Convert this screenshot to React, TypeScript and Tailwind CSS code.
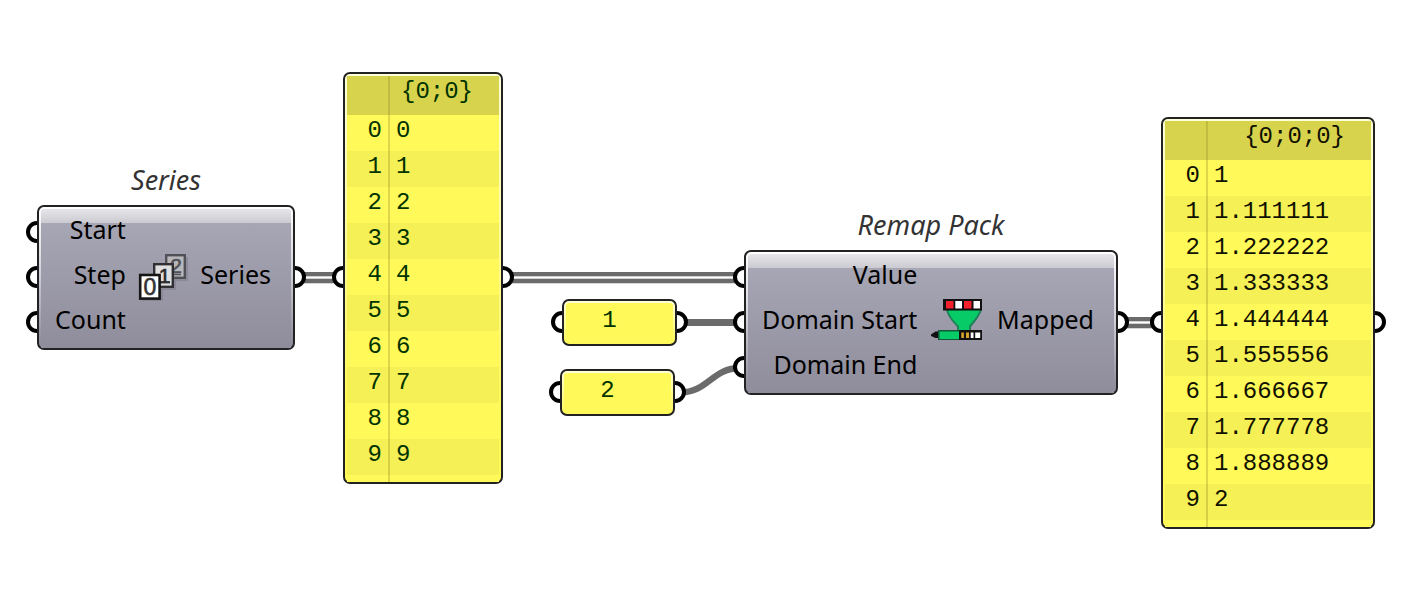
import type { ReactNode } from "react";

function Grips({ side, count = 1, offset }: { side: "left" | "right"; count?: number; offset: string }) {
  return (
    <div className={`absolute flex flex-col gap-[23px] ${side === "left" ? "-left-[11px]" : "-right-[11px]"} ${offset}`}>
      {Array.from({ length: count }, (_, i) => (
        <span key={i} className="block size-[22px] rounded-full border-4 border-black bg-white" />
      ))}
    </div>
  );
}

function ComponentNode({
  title,
  inputs,
  output,
  icon,
  place,
}: {
  title: string;
  inputs: string[];
  output: string;
  icon: ReactNode;
  place: string;
}) {
  return (
    <section className={`absolute ${place}`}>
      <h2 className="absolute inset-x-0 bottom-full pb-[7px] text-center text-[27px] leading-9 text-[#333] italic">{title}</h2>
      <Grips side="left" count={inputs.length} offset="top-4" />
      <Grips side="right" offset="top-[61px]" />
      <div className="relative rounded-[7px] border-2 border-[#222] bg-[linear-gradient(#ffffff,#d4d4dc_45%,#918f9d_95%)] px-[2px] pt-[2px]">
        <div className="flex items-center justify-between rounded-t-[3px] bg-[linear-gradient(#e6e6ea,#cacad0_14px,#a7a6b4_14px,#8f8d9b)] pr-5 pl-[14px]">
          <ul className="-mt-[2px] pb-[6px] text-right">
            {inputs.map((name) => (
              <li key={name} className="leading-[45px]">
                {name}
              </li>
            ))}
          </ul>
          <div className="pb-1">{icon}</div>
          <p className="pb-2 leading-[45px]">{output}</p>
        </div>
      </div>
    </section>
  );
}

function DataPanel({ path, values, place, ink }: { path: string; values: string[]; place: string; ink: string }) {
  return (
    <section className={`absolute ${place}`}>
      <Grips side="left" offset="top-[194px]" />
      <Grips side="right" offset="top-[194px]" />
      <div className="relative rounded-[7px] border-2 border-[#222] bg-[linear-gradient(#ffffd8,#fdfbb0_30%,#fff95a_80%)] px-[2px] pt-[2px]">
        <div className="relative rounded-t-[3px] bg-[#fff95a] pb-[7px]">
          <table className={`w-full table-fixed border-collapse font-['Liberation_Mono',monospace] text-[24px] ${ink}`}>
            <thead>
              <tr className="bg-[#d8d34d]">
                <td className="w-[41px]" />
                <th scope="col" className="pr-[26px] pb-2 text-right leading-[31px] font-normal">
                  {path}
                </th>
              </tr>
            </thead>
            <tbody>
              {values.map((value, i) => (
                <tr key={i} className="odd:bg-[#fff95a] even:bg-[#f5f055]">
                  <th scope="row" className="pr-[6px] pb-1 text-right leading-8 font-normal">
                    {i}
                  </th>
                  <td className="pb-1 pl-2 text-left leading-8">{value}</td>
                </tr>
              ))}
            </tbody>
          </table>
          <span className="absolute inset-y-0 left-[41px] w-[2px] bg-[#8c8420]/30" />
        </div>
      </div>
    </section>
  );
}

function ValuePanel({ value, place }: { value: string; place: string }) {
  return (
    <section className={`absolute w-[115px] ${place}`}>
      <Grips side="left" offset="top-3" />
      <Grips side="right" offset="top-3" />
      <div className="relative rounded-[7px] border-2 border-[#222] bg-[linear-gradient(#ffffd8,#fff95a)] px-[2px] pt-[2px] pb-px">
        <p className="rounded-[3px] bg-[#fff95a] pr-5 pb-[4px] text-center font-['Liberation_Mono',monospace] text-[24px] leading-9 text-[#003300]">
          {value}
        </p>
      </div>
    </section>
  );
}

function SeriesIcon() {
  return (
    <svg width="50" height="48" viewBox="0 0 50 48" className="shrink-0" fontFamily="Liberation Sans Narrow, Liberation Sans, sans-serif" textAnchor="middle" aria-hidden="true">
      <g fill="#5c5a68" opacity=".25">
        <rect x="30" y="4" width="20" height="24" />
        <rect x="18" y="13" width="20" height="24" />
        <rect x="4" y="24" width="21" height="24" />
      </g>
      <rect x="28.2" y="2.2" width="18.6" height="22.6" fill="#b8b8bc" stroke="#505056" strokeWidth="2.4" />
      <text x="38" y="19.5" fontSize="21" fill="#505056" stroke="#505056" strokeWidth=".6">2</text>
      <path d="M32 21.5H43" stroke="#505056" strokeWidth="1.5" />
      <rect x="16.2" y="11.2" width="18.6" height="22.6" fill="#e0e0e0" stroke="#303034" strokeWidth="2.4" />
      <text x="26.5" y="30" fontSize="21" fill="#29292c" stroke="#29292c" strokeWidth=".6">1</text>
      <path d="M22 29.3H32" stroke="#303034" strokeWidth="1.8" />
      <rect x="2.2" y="22" width="19.4" height="23.6" fill="#fff" stroke="#161616" strokeWidth="2.6" />
      <text x="12" y="42" fontSize="23" fill="#333" stroke="#333" strokeWidth=".6">0</text>
    </svg>
  );
}

function RemapIcon() {
  return (
    <svg width="52" height="48" viewBox="0 0 52 48" className="shrink-0" aria-hidden="true">
      <path d="M15 12H51C48 20 43 25 40 29V32H26V29C23 25 17 20 15 12Z" fill="#21805a" />
      <path d="M17 12H49C46 19 41 24 38 28V32H28V28C24 24 19 19 17 12Z" fill="#06cb66" />
      <rect x="12" y="1" width="39" height="11.5" fill="#111" />
      <rect x="15" y="3" width="7.5" height="7.5" fill="#f5222d" />
      <rect x="24.3" y="3" width="6.7" height="7.5" fill="#fff" />
      <rect x="33" y="3" width="7.5" height="7.5" fill="#f5222d" />
      <rect x="42.5" y="3" width="6.5" height="7.5" fill="#fff" />
      <path d="M0 36.5L4.5 33.5H7.5V40H4.5L0 38Z" fill="#111" />
      <rect x="7" y="32" width="22" height="10" fill="#14573a" />
      <rect x="8.5" y="33.5" width="19.5" height="7.5" fill="#06cb66" />
      <rect x="28" y="32" width="23" height="10" fill="#111" />
      <rect x="30.3" y="34.5" width="2.6" height="5.5" fill="#d8a32a" />
      <rect x="35" y="34.5" width="3" height="5.5" fill="#d8a32a" />
      <rect x="39.7" y="34.5" width="2.8" height="5.5" fill="#fff" />
      <rect x="44.2" y="34.5" width="5" height="5.5" fill="#fff" />
    </svg>
  );
}

function DoubleWire({ from, to, y }: { from: number; to: number; y: number }) {
  return (
    <g>
      <path d={`M${from} ${y + 0.5}H${to}`} stroke="#d6d6d6" strokeWidth="12" />
      <path d={`M${from} ${y}H${to}`} stroke="#6b6b6b" strokeWidth="11" />
      <path d={`M${from} ${y}H${to}`} stroke="#d0d0d0" strokeWidth="3" />
      <path d={`M${from} ${y}H${to}`} stroke="#fff" strokeWidth="1" />
    </g>
  );
}

export default function App() {
  return (
    <main className="relative min-h-screen overflow-hidden bg-white font-['Noto_Sans',sans-serif] text-[25px] text-black">
      <svg className="absolute inset-0 size-full" fill="none" aria-hidden="true">
        <DoubleWire from={296} to={343} y={277.5} />
        <DoubleWire from={504} to={744} y={277.5} />
        <DoubleWire from={1118} to={1161} y={322.5} />
        <path d="M677 322.5H744" stroke="#6b6b6b" strokeWidth="7" />
        <path d="M674 392.5H680C708 392.5 712 368 740 368" stroke="#6b6b6b" strokeWidth="6.5" />
      </svg>

      <ComponentNode title="Series" inputs={["Start", "Step", "Count"]} output="Series" icon={<SeriesIcon />} place="top-[205px] left-[37px] w-[258px]" />
      <DataPanel
        path="{0;0}"
        values={["0", "1", "2", "3", "4", "5", "6", "7", "8", "9"]}
        place="top-[72px] left-[343px] w-[160px]"
        ink="text-[#003300]"
      />
      <ValuePanel value="1" place="top-[299px] left-[562px]" />
      <ValuePanel value="2" place="top-[369px] left-[560px]" />
      <ComponentNode
        title="Remap Pack"
        inputs={["Value", "Domain Start", "Domain End"]}
        output="Mapped"
        icon={<RemapIcon />}
        place="top-[250px] left-[744px] w-[374px]"
      />
      <DataPanel
        path="{0;0;0}"
        values={["1", "1.111111", "1.222222", "1.333333", "1.444444", "1.555556", "1.666667", "1.777778", "1.888889", "2"]}
        place="top-[117px] left-[1161px] w-[214px]"
        ink="text-[#111100]"
      />
    </main>
  );
}
